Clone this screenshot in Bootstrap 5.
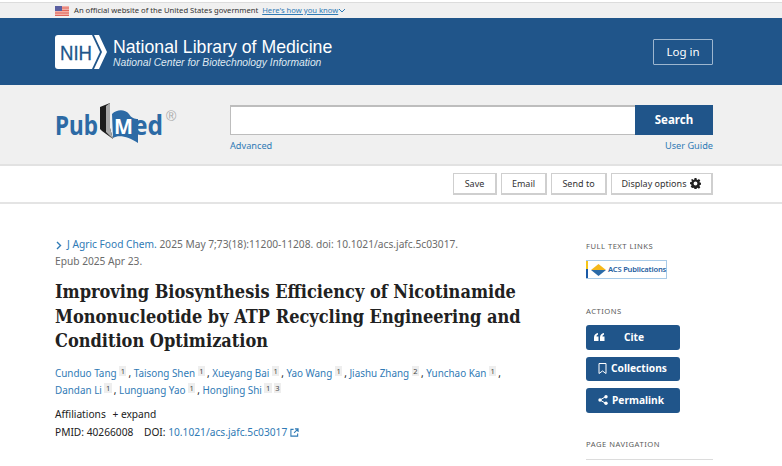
<!DOCTYPE html>
<html lang="en">
<head>
    <meta charset="UTF-8">
    <meta name="viewport" content="width=device-width, initial-scale=1.0">
    <title>PubMed</title>
    <link rel="stylesheet" href="https://cdn.jsdelivr.net/npm/bootstrap@5.3.0/dist/css/bootstrap.min.css">
    <style>
        body {
            font-family: "Noto Sans", "Open Sans", sans-serif;
            font-size: 10.2px;
            color: #212121;
            overflow: hidden;
        }
        a { color: #2f7ab5; text-decoration: none; }
        .wrap { padding-left: 55px; padding-right: 69px; }
        .gov-strip {
            height: 16px;
            margin-top: 2px;
            background: #f0f0f0;
            border-top: 1px solid #dcdcdc;
            font-size: 7.65px;
            color: #333;
        }
        .gov-strip a { text-decoration: underline; }
        .flag-icon { margin-right: 5px; }
        .ncbi-head { height: 67px; background: #20558a; color: #fff; }
        .ncbi-text { margin-left: 5px; padding-top: 2px; }
        .ncbi-title { font-family: "Liberation Sans", sans-serif; font-size: 17.7px; line-height: 20px; }
        .ncbi-sub { font-family: "Liberation Sans", sans-serif; font-style: italic; font-size: 10.3px; line-height: 12px; color: #dfe8f1; }
        .login-btn {
            width: 60px; height: 26px; padding: 0;
            border: 1px solid #9db6cf; border-radius: 1px;
            color: #fff; font-size: 11.5px;
        }
        .search-band { height: 81px; background: #f0f0f0; border-bottom: 2px solid #e2e2e2; padding-top: 20px; }
        .pm-logo { margin-top: -7px; }
        .search-col { margin-left: 50px; flex: 1; }
        .search-box { height: 30px; border: 1px solid #bdbdbd; border-radius: 0; border-width: 2px 0 1px 1px; }
        .search-btn {
            width: 78px; height: 30px; padding: 0; border: 0; border-radius: 0;
            background: #20558a; color: #fff; font-weight: 700; font-size: 11.5px;
        }
        .search-links { font-size: 9.2px; margin-top: 4px; }
        .toolbar { height: 38px; border-bottom: 2px solid #e4e4e4; padding-top: 7px; }
        .tool-btn {
            height: 22px; padding: 0; border: 2px solid #cfcfcf; border-width: 1px 2px 2px 1px;
            border-radius: 0; font-size: 9px; color: #333; background: #fff;
        }
        .tool-save { width: 44px; }
        .tool-email { width: 46px; }
        .tool-send { width: 56px; }
        .tool-display { width: 102px; }
        .page-main { padding-top: 32px; }
        .article { width: 531px; }
        .cite-line { font-size: 10.2px; line-height: 17px; color: #6b6b6b; }
        .art-title {
            font-family: "DejaVu Serif Condensed", "DejaVu Serif", serif;
            font-stretch: condensed;
            font-weight: 700; font-size: 18px; line-height: 24.5px; color: #212121;
            margin: 10px 0 11px;
            white-space: nowrap;
        }
        .authors { font-size: 9.9px; line-height: 17px; white-space: nowrap; }
        .aff-num {
            display: inline-block; background: #eee; color: #444;
            font-size: 7.5px; line-height: 10px; padding: 0 1.5px; vertical-align: 3px; margin-right: 2px;
        }
        .meta-first { margin-top: 6px; }
        .meta-line { line-height: 18px; }
        .side { width: 127px; }
        .side-head { font-size: 7.6px; line-height: 10px; letter-spacing: .5px; color: #5b5b5b; text-transform: uppercase; }
        .side-full { margin-top: 5px; }
        .acs-logo {
            width: 81px; height: 19px; margin-top: 9px;
            border: 1px solid #a9cbe8; border-left: 0;
            font-size: 7.6px; font-weight: 600; color: #27609f; letter-spacing: -.2px; white-space: nowrap;
        }
        .acs-strip { width: 2px; align-self: stretch; background: linear-gradient(#f5c518 45%, #1a5aa6 45%); }
        .acs-mark { margin: 0 2px 0 3px; }
        .side-actions { margin-top: 27px; margin-bottom: 9px; }
        .side-btn {
            width: 94px; height: 24.5px; padding: 0 0 0 8px; border: 0; border-radius: 3px;
            background: #20558a; color: #fff; font-weight: 700; font-size: 10.2px; margin-bottom: 7px;
        }
        .side-btn:hover { background: #20558a; color: #fff; }
        .cite-text { margin-left: 19px; }
        .side-pagenav { margin-top: 26px; }
        .nav-rule { height: 1px; background: #dcdcdc; margin-top: 10px; }
    </style>
</head>
<body>
    <div class="gov-strip wrap d-flex align-items-center">
        <svg width="14" height="10" viewBox="0 0 14 10" class="flag-icon flex-shrink-0">
            <rect width="14" height="10" fill="#f3b0a6"/>
            <rect y="1.500" width="14" height="1" fill="#e0655a"/>
            <rect y="4" width="14" height="1" fill="#e0655a"/>
            <rect y="6.500" width="14" height="1" fill="#e0655a"/>
            <rect y="9" width="14" height="1" fill="#e0655a"/>
            <rect width="7" height="5" fill="#5a5fa0"/>
        </svg>
        <span>An official website of the United States government</span>
        <a href="#" class="ms-1">Here's how you know</a>
        <svg width="8" height="6" viewBox="0 0 8 6"><path d="M1 1l3 3 3-3" fill="none" stroke="#2f7ab5" stroke-width="1"/></svg>
    </div>

    <header class="ncbi-head wrap d-flex align-items-center justify-content-between">
        <div class="d-flex align-items-center">
            <svg width="53" height="34" viewBox="0 0 53 34" class="flex-shrink-0">
                <path d="M3 0H37L45 17 37 34H3a3 3 0 0 1-3-3V3a3 3 0 0 1 3-3z" fill="#fff"/>
                <path d="M39 0h5l8 17-8 17h-5l8-17z" fill="#fff"/>
                <text x="5" y="25" font-family="Liberation Sans, sans-serif" font-size="21" fill="#20558a" stroke="#20558a" stroke-width=".3" textLength="32" lengthAdjust="spacingAndGlyphs">NIH</text>
            </svg>
            <div class="ncbi-text">
                <div class="ncbi-title">National Library of Medicine</div>
                <div class="ncbi-sub">National Center for Biotechnology Information</div>
            </div>
        </div>
        <a href="#" class="btn login-btn d-flex align-items-center justify-content-center">Log in</a>
    </header>

    <div class="search-band wrap d-flex">
        <svg width="125" height="48" viewBox="0 0 125 48" class="pm-logo flex-shrink-0">
            <text x="0" y="37" font-family="Noto Sans, sans-serif" font-weight="700" font-size="26" fill="#2c6aa5" textLength="43" lengthAdjust="spacingAndGlyphs">Pub</text>
            <path d="M45 9L55 5V30L58 41 47 33 45 31z" fill="#1c1c1c"/>
            <path d="M51 8l4-3v25l3 11-7-7z" fill="#a8a8a8"/>
            <path d="M57 16C62 11 70 11 74 16 76 20 80 21 83 21V45C74 39 64 36 58 40z" fill="#2c6aa5"/>
            <text x="59" y="36" font-family="Noto Sans, sans-serif" font-weight="700" font-size="21" fill="#fff" textLength="19" lengthAdjust="spacingAndGlyphs">M</text>
            <text x="78" y="37" font-family="Noto Sans, sans-serif" font-weight="700" font-size="26" fill="#2c6aa5" textLength="30" lengthAdjust="spacingAndGlyphs">ed</text>
            <text x="111" y="23" font-family="Liberation Sans, sans-serif" font-size="14" fill="#aaa">®</text>
        </svg>
        <div class="search-col">
            <form class="d-flex">
                <input type="text" class="form-control search-box" aria-label="Search">
                <button type="button" class="btn search-btn flex-shrink-0">Search</button>
            </form>
            <div class="search-links d-flex justify-content-between">
                <a href="#">Advanced</a>
                <a href="#">User Guide</a>
            </div>
        </div>
    </div>

    <div class="toolbar wrap d-flex justify-content-end gap-1">
        <button class="btn tool-btn tool-save">Save</button>
        <button class="btn tool-btn tool-email">Email</button>
        <button class="btn tool-btn tool-send">Send to</button>
        <button class="btn tool-btn tool-display d-flex align-items-center justify-content-center gap-1">Display options
            <svg width="11" height="11" viewBox="0 0 16 16"><path fill="#222" fill-rule="evenodd" d="M6.600 0h2.800l.4 2.200 1.300.6L13 1.500l2 2-1.300 1.900.6 1.300 2.200.4v2.800l-2.200.4-.6 1.300 1.300 1.900-2 2-1.900-1.300-1.300.6-.4 2.200H6.600l-.4-2.200-1.300-.6L3 14.500l-2-2 1.300-1.900-.6-1.300L0 8.900V6.100l2.200-.4.6-1.300L1.500 2.500l2-1 1.400 1.300 1.300-.6zM8 5.200a2.800 2.800 0 1 0 0 5.600 2.800 2.800 0 0 0 0-5.600z"/></svg>
        </button>
    </div>

    <main class="page-main wrap d-flex">
        <article class="article">
            <div class="cite-line">
                <svg width="8" height="9" viewBox="0 0 8 9" class="me-1"><path d="M2 1l3.500 3.500L2 8" fill="none" stroke="#2f7ab5" stroke-width="1.400"/></svg><a href="#">J Agric Food Chem.</a> 2025 May 7;73(18):11200-11208. doi: 10.1021/acs.jafc.5c03017.<br>Epub 2025 Apr 23.
            </div>
            <h1 class="art-title">Improving Biosynthesis Efficiency of Nicotinamide<br>Mononucleotide by ATP Recycling Engineering and<br>Condition Optimization</h1>
            <div class="authors">
                <a href="#">Cunduo Tang</a> <span class="aff-num">1</span>, <a href="#">Taisong Shen</a> <span class="aff-num">1</span>, <a href="#">Xueyang Bai</a> <span class="aff-num">1</span>, <a href="#">Yao Wang</a> <span class="aff-num">1</span>, <a href="#">Jiashu Zhang</a> <span class="aff-num">2</span>, <a href="#">Yunchao Kan</a> <span class="aff-num">1</span>,<br>
                <a href="#">Dandan Li</a> <span class="aff-num">1</span>, <a href="#">Lunguang Yao</a> <span class="aff-num">1</span>, <a href="#">Hongling Shi</a> <span class="aff-num">1</span><span class="aff-num">3</span>
            </div>
            <div class="meta-line meta-first">Affiliations <span class="ms-1">+</span> expand</div>
            <div class="meta-line">PMID: 40266008 <span class="ms-2">DOI:</span> <a href="#">10.1021/acs.jafc.5c03017</a>
                <svg width="9" height="9" viewBox="0 0 10 10"><path d="M8.500 6v3H1V1.500h3M5.500 1H9v3.500M9 1L4.500 5.500" fill="none" stroke="#2f7ab5" stroke-width="1.200"/></svg>
            </div>
        </article>
        <aside class="side">
            <div class="side-head side-full">Full text links</div>
            <div class="acs-logo d-flex align-items-center">
                <span class="acs-strip flex-shrink-0"></span>
                <svg width="15" height="12" viewBox="0 0 15 12" class="acs-mark flex-shrink-0"><path d="M7.500 0L15 6H0z" fill="#f5b81c"/><path d="M0 6h15l-7.500 6z" fill="#2a6aa8"/></svg>
                <span>ACS Publications</span>
            </div>
            <div class="side-head side-actions">Actions</div>
            <button class="btn side-btn d-flex align-items-center">
                <svg width="11" height="8" viewBox="0 0 11 8" class="flex-shrink-0"><path d="M0 8V4.500C0 2 1.500.5 4 0v1.500C3 2 2.500 2.500 2.500 3.500H4.500V8zM6 8V4.500C6 2 7.500.5 10 0v1.500C9 2 8.500 2.500 8.500 3.500h2V8z" fill="#fff"/></svg>
                <span class="cite-text">Cite</span>
            </button>
            <button class="btn side-btn d-flex align-items-center">
                <svg width="9" height="11" viewBox="0 0 9 11" class="ms-1 me-1 flex-shrink-0"><path d="M1 .5h7v10L4.500 8 1 10.500z" fill="none" stroke="#fff"/></svg>
                <span>Collections</span>
            </button>
            <button class="btn side-btn d-flex align-items-center">
                <svg width="10" height="10" viewBox="0 0 10 10" class="ms-1 me-1 flex-shrink-0"><path d="M8 1.500L2 5l6 3.500" fill="none" stroke="#fff"/><circle cx="8" cy="1.800" r="1.700" fill="#fff"/><circle cx="2" cy="5" r="1.700" fill="#fff"/><circle cx="8" cy="8.200" r="1.700" fill="#fff"/></svg>
                <span>Permalink</span>
            </button>
            <div class="side-head side-pagenav">Page navigation</div>
            <div class="nav-rule"></div>
        </aside>
    </main>
</body>
</html>
